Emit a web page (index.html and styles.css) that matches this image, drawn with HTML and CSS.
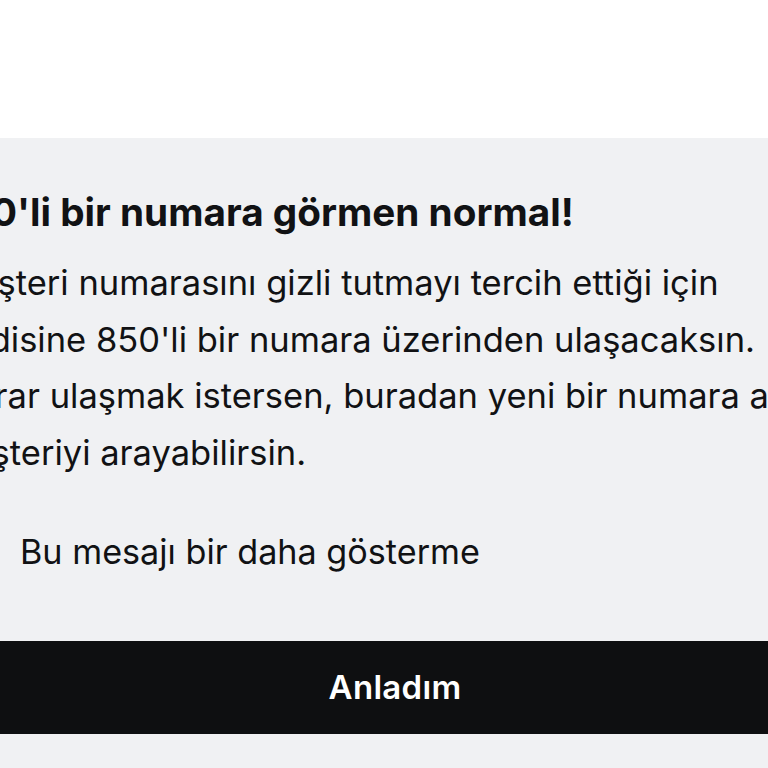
FILE: index.html
```html
<!DOCTYPE html>
<html lang="tr">
<head>
<meta charset="utf-8">
<link rel="stylesheet" href="styles.css">
</head>
<body>
<div class="page">
  <div class="topbar"></div>
  <div class="sheet">
    <div class="inner">
      <h1 class="title">850'li bir numara görmen normal!</h1>
      <div class="body">
        <div class="line line-1">Müşteri numarasını gizli tutmayı tercih ettiği için</div>
        <div class="line line-2">kendisine 850'li bir numara üzerinden ulaşacaksın.</div>
        <div class="line line-3">Tekrar ulaşmak istersen, buradan yeni bir numara alarak</div>
        <div class="line line-4">müşteriyi arayabilirsin.</div>
      </div>
      <label class="check">
        <span class="box"></span>
        <span class="check-text">Bu mesajı bir daha gösterme</span>
      </label>
    </div>
    <div class="button">Anladım</div>
  </div>
</div>
</body>
</html>
```
FILE: styles.css
```css
html, body {
  margin: 0;
  padding: 0;
  background: #ffffff;
}
.page {
  width: 768px;
  height: 768px;
  overflow: hidden;
  font-family: Inter, "Noto Sans", sans-serif;
  color: #111214;
  font-variant-ligatures: none;
}
.topbar {
  height: 138px;
  background: #ffffff;
}
.sheet {
  height: 630px;
  background: #f0f1f3;
  overflow: hidden;
  padding-top: 50px;
  box-sizing: border-box;
}
.inner {
  margin-left: -57px;
  white-space: nowrap;
}
.title {
  margin: 0;
  font-size: 38.7px;
  font-weight: 700;
  line-height: 48px;
  text-indent: -2px;
}
.body {
  margin-top: 19px;
  font-size: 34.5px;
  line-height: 56.7px;
}
.line-1 {
  text-indent: 3px;
}
.line-2 {
  text-indent: -12px;
}
.line-3 {
  text-indent: -7px;
}
.line-4 {
  text-indent: -2px;
}
.check {
  display: flex;
  align-items: center;
  gap: 37px;
  margin-top: 48px;
  font-size: 34.2px;
  line-height: 44px;
}
.box {
  width: 40px;
  height: 40px;
  border: 3px solid #111214;
  border-radius: 8px;
  box-sizing: border-box;
  flex: none;
}
.button {
  margin-top: 67px;
  margin-left: -46px;
  width: 882px;
  height: 93px;
  background: #0e0f11;
  color: #ffffff;
  font-size: 33px;
  font-weight: 600;
  letter-spacing: 0.3px;
  display: flex;
  align-items: center;
  justify-content: center;
}
```
